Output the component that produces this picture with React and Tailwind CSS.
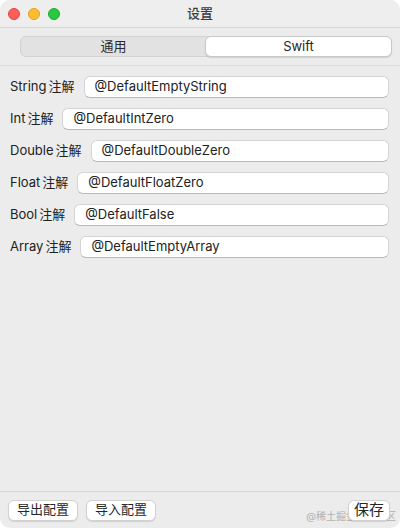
import React from "react";

const rows = [
  ["String", "@DefaultEmptyString"],
  ["Int", "@DefaultIntZero"],
  ["Double", "@DefaultDoubleZero"],
  ["Float", "@DefaultFloatZero"],
  ["Bool", "@DefaultFalse"],
  ["Array", "@DefaultEmptyArray"],
];

export default function App() {
  return (
    <div className="w-[400px] h-[528px] bg-white">
      <div
        className="relative w-[400px] h-[528px] bg-[#ececec] rounded-[10px] overflow-hidden flex flex-col text-[#262626]"
        style={{ fontFamily: '"Inter", "Noto Sans CJK SC", sans-serif' }}
      >
        {/* title bar */}
        <div className="h-[28px] shrink-0 flex items-center relative border-b border-[#d6d6d6] bg-[#eeeeee]">
          <div className="flex items-center gap-[8px] pl-[8px]">
            <div className="w-[12px] h-[12px] rounded-full bg-[#fe5f57] border border-[#e0443e]" />
            <div className="w-[12px] h-[12px] rounded-full bg-[#febc2e] border border-[#dea123]" />
            <div className="w-[12px] h-[12px] rounded-full bg-[#28c840] border border-[#1aab29]" />
          </div>
          <div className="absolute inset-0 flex items-center justify-center text-[13px] font-medium text-[#3a3a3a]">
            设置
          </div>
        </div>

        {/* tabs */}
        <div className="h-[38px] shrink-0 flex items-center pl-[20px] pr-[8px] border-b border-[#dcdcdc]">
          <div className="flex w-full h-[21px] rounded-[6px] bg-[#e2e2e2] border border-[#d2d2d2] text-[13px]">
            <div className="flex-1 flex items-center justify-center text-[#2a2a2a]">通用</div>
            <div className="flex-1 flex items-center justify-center bg-white rounded-[6px] border border-[#c8c8c8] -m-px shadow-[0_1px_1px_rgba(0,0,0,0.12)]">
              Swift
            </div>
          </div>
        </div>

        {/* rows */}
        <div className="flex flex-col gap-[10px] pt-[10px] pl-[10px] pr-[11px]">
          {rows.map(([k, v]) => (
            <div key={k} className="flex items-center h-[22px] gap-[9px]">
              <div className="text-[13px] whitespace-nowrap text-[#222222]">
                {k}<span className="ml-[2px]">注解</span>
              </div>
              <div className="flex-1 h-[22px] bg-white rounded-[6px] border border-[#d4d4d4] border-b-[#b9b9b9] flex items-center pl-[10px] text-[13px] text-[#222222]">
                {v}
              </div>
            </div>
          ))}
        </div>

        <div className="flex-1" />

        {/* footer */}
        <div className="h-[37px] shrink-0 border-t border-[#d6d6d6] flex items-center px-[8px] relative">
          <div className="absolute right-[4px] top-[17px] text-[10px] text-[#b0b0b0] pointer-events-none">
            @稀土掘金技术社区
          </div>
          <div className="flex gap-[8px]">
            <button className="h-[21px] w-[70px] bg-white rounded-[6px] border border-[#d2d2d2] shadow-[0_1px_1px_rgba(0,0,0,0.12)] text-[13px] flex items-center justify-center">
              导出配置
            </button>
            <button className="h-[21px] w-[70px] bg-white rounded-[6px] border border-[#d2d2d2] shadow-[0_1px_1px_rgba(0,0,0,0.12)] text-[13px] flex items-center justify-center">
              导入配置
            </button>
          </div>
          <div className="flex-1" />
          <button className="relative h-[21px] w-[42px] mr-[2px] bg-white rounded-[6px] border border-[#d2d2d2] shadow-[0_1px_1px_rgba(0,0,0,0.12)] text-[15px] flex items-center justify-center">
            保存
          </button>
        </div>
      </div>
    </div>
  );
}
